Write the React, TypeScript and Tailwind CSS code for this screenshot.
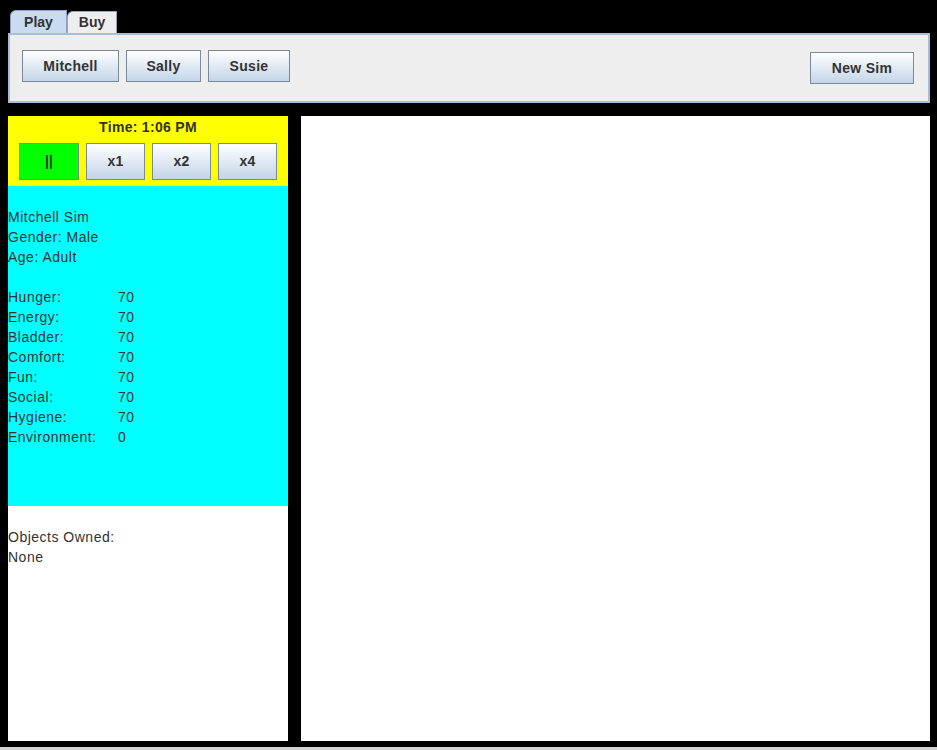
const btn =
  'flex items-center justify-center border border-[#7a8a99] bg-gradient-to-b from-white to-[#c3d5e8] text-[14px] font-bold tracking-[0.3px] text-[#333]';

const stats = [
  ['Hunger:', '70'],
  ['Energy:', '70'],
  ['Bladder:', '70'],
  ['Comfort:', '70'],
  ['Fun:', '70'],
  ['Social:', '70'],
  ['Hygiene:', '70'],
  ['Environment:', '0'],
];

export default function App() {
  return (
    <div className="w-[937px] h-[750px] bg-black flex flex-col font-['Liberation_Sans',Arial,sans-serif] overflow-hidden">
      {/* tabs */}
      <div className="flex pl-[10px] pt-[10px] h-[33px]">
        <div className="w-[57px] h-[24px] rounded-tl-[6px] border border-b-0 border-[#8da2c0] bg-[#c8dbf0] text-[14px] font-bold text-[#333] flex items-center justify-center">
          Play
        </div>
        <div className="w-[50px] h-[22px] mt-[1px] rounded-tl-[6px] border border-b-0 border-[#9aa5b2] bg-[#eeeeee] text-[14px] font-bold text-[#333] flex items-center justify-center">
          Buy
        </div>
      </div>
      <div className="ml-[8px] w-[922px] h-[70px] border-2 border-[#a9bcd6] bg-[#eeeeee] flex items-start justify-between pl-[12px] pr-[14px]">
        <div className="flex gap-[7px] mt-[15px]">
          <div className={`${btn} w-[97px] h-[32px]`}>Mitchell</div>
          <div className={`${btn} w-[75px] h-[32px]`}>Sally</div>
          <div className={`${btn} w-[82px] h-[32px]`}>Susie</div>
        </div>
        <div className={`${btn} w-[104px] h-[32px] mt-[17px]`}>New Sim</div>
      </div>

      <div className="flex gap-[13px] ml-[8px] mt-[13px] h-[625px]">
        <div className="w-[280px] flex flex-col">
          <div className="h-[70px] bg-[#ffff00] flex flex-col items-center">
            <div className="mt-[1px] h-[20px] leading-[20px] text-[14px] font-bold tracking-[0.3px] text-[#333]">Time: 1:06 PM</div>
            <div className="flex gap-[7px] mt-[6px]">
              <div className="w-[60px] h-[37px] border border-[#7a8a99] bg-[#00ff00] flex items-center justify-center text-[14px] font-bold text-[#333]">||</div>
              <div className={`${btn} w-[59px] h-[37px]`}>x1</div>
              <div className={`${btn} w-[59px] h-[37px]`}>x2</div>
              <div className={`${btn} w-[59px] h-[37px]`}>x4</div>
            </div>
          </div>
          <div className="h-[320px] bg-[#00ffff] pt-[21px] text-[14px] leading-[20px] tracking-[0.5px] text-[#333]">
            <div>Mitchell Sim</div>
            <div>Gender: Male</div>
            <div>Age: Adult</div>
            <div className="h-[20px]" />
            {stats.map(([k, v]) => (
              <div key={k} className="flex">
                <span className="w-[110px]">{k}</span>
                <span>{v}</span>
              </div>
            ))}
          </div>
          <div className="flex-1 bg-white pt-[21px] text-[14px] leading-[20px] tracking-[0.5px] text-[#333]">
            <div>Objects Owned:</div>
            <div>None</div>
          </div>
        </div>
        <div className="w-[629px] bg-white" />
      </div>
      <div className="mt-[6px] flex-1 bg-[#d4d4d4]" />
    </div>
  );
}
